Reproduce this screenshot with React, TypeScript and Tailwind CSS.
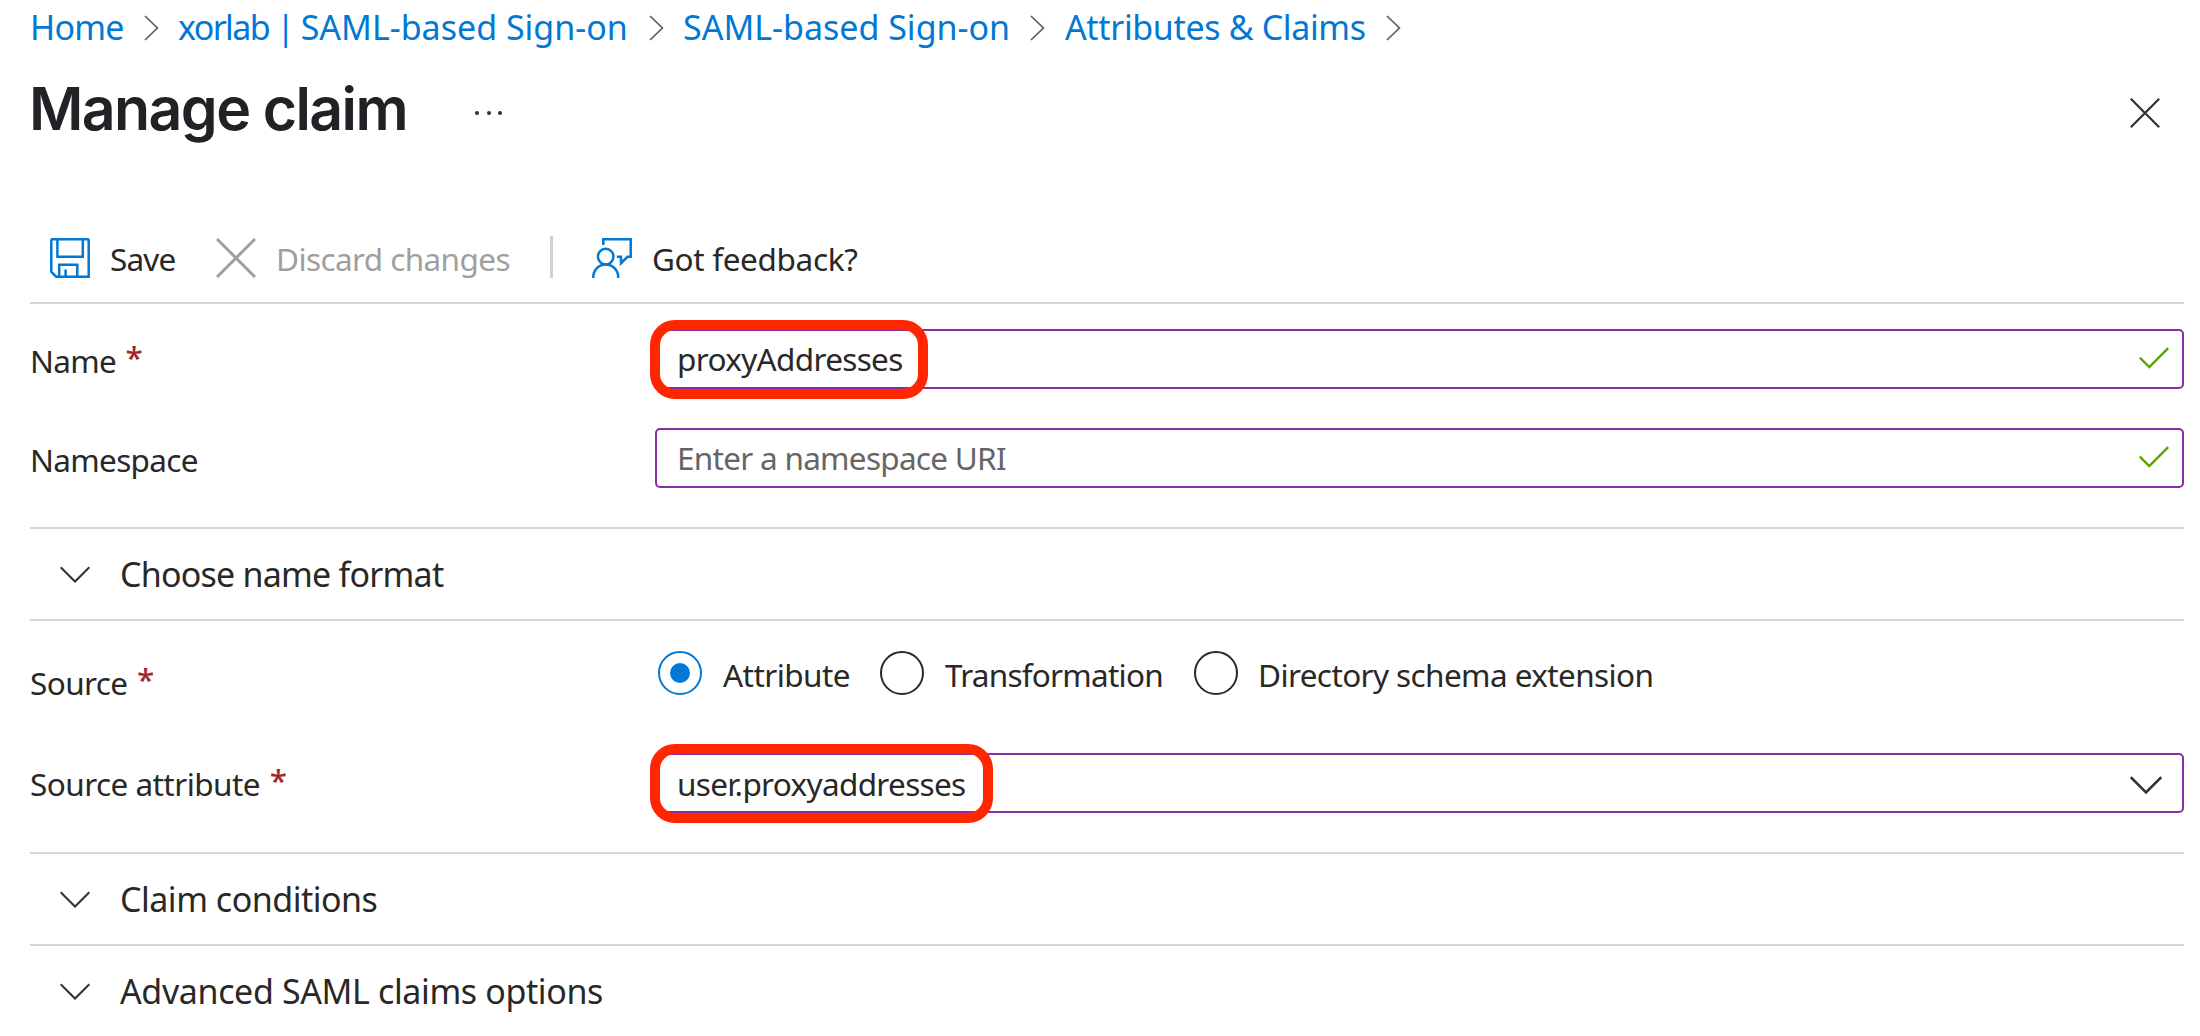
import React, { ReactNode } from 'react';

function BreadcrumbChevron() {
  return (
    <svg width="15" height="26" viewBox="0 0 15 26" className="mt-[2px] -ml-px mr-px shrink-0" fill="none" stroke="#605e5c" strokeWidth="1.7">
      <path d="M1 1L13.4 13L1 25" />
    </svg>
  );
}

function ChevronDown({ className = '', w = 30, stroke = 2 }: { className?: string; w?: number; stroke?: number }) {
  return (
    <svg width={w} height={(w * 18) / 30} viewBox="0 0 30 18" className={`shrink-0 ${className}`} fill="none" stroke="#323130" strokeWidth={stroke}>
      <path d="M0.7 1.2L15 15.5L29.3 1.2" />
    </svg>
  );
}

function Check() {
  return (
    <svg width="30" height="22" viewBox="0 0 30 22" className="-mt-[2px] mr-[13px] shrink-0" fill="none" stroke="#57a300" strokeWidth="2.4">
      <path d="M0.8 10.6L10.3 20L29.2 1.2" />
    </svg>
  );
}

function SaveIcon() {
  return (
    <svg width="40" height="40" viewBox="0 0 40 40" className="shrink-0" fill="none" stroke="#0078d4" strokeWidth="2.5">
      <path d="M1.3 2.2Q1.3 1.3 2.2 1.3H37.8Q38.7 1.3 38.7 2.2V38.7H6.2L1.3 33.8Z" />
      <path d="M7.4 1.3V18.7H32.8V1.3" />
      <path d="M9.2 38.7V26.7H27.3V38.7" />
      <path d="M15.6 38.7V31.5" />
    </svg>
  );
}

function FeedbackIcon() {
  return (
    <svg width="40" height="40" viewBox="0 0 40 40" className="shrink-0" fill="none" stroke="#0078d4" strokeWidth="2.5">
      <circle cx="13.7" cy="18.6" r="7.8" />
      <path d="M1.3 40V39C1.3 32 6.8 26.4 13.7 26.4S26.2 32 26.2 39V40" />
      <path d="M11.3 7V1.3H38.7V18.8H35.5L29 25.2V18.8H24.8" />
    </svg>
  );
}

function Required() {
  return <span className="relative -top-1 left-[2px] font-medium text-[#a4262c]">*</span>;
}

function Highlight({ className }: { className: string }) {
  return <div className={`absolute -left-[5px] -top-[10px] h-[79px] rounded-[25px] border-[10px] border-[#ff2600] ${className}`} />;
}

function Field({ children, icon, highlight }: { children: ReactNode; icon: ReactNode; highlight?: string }) {
  return (
    <div className="relative flex h-[60px] w-[1529px] items-center justify-between rounded-[5px] border-2 border-[#8a2da5] pl-5">
      {children}
      {icon}
      {highlight && (
        <div className="absolute -left-[2px] -top-[1px]">
          <Highlight className={highlight} />
        </div>
      )}
    </div>
  );
}

function Radio({ checked, className = '' }: { checked?: boolean; className?: string }) {
  return (
    <span className={`flex size-11 shrink-0 items-center justify-center rounded-full border-2 ${checked ? 'border-[#0078d4]' : 'border-[#292827]'} ${className}`}>
      {checked && <span className="size-5 rounded-full bg-[#0078d4]" />}
    </span>
  );
}

function Section({ children, className = '' }: { children: ReactNode; className?: string }) {
  return (
    <div className={`ml-[30px] mr-4 flex h-[92px] items-center border-t-2 border-[#d6d6d6] pl-[30px] text-[34px] ${className}`}>
      <ChevronDown className="mt-px" />
      {children}
    </div>
  );
}

export default function App() {
  return (
    <div className="h-[1036px] w-[2200px] overflow-hidden bg-white font-['Noto_Sans',sans-serif] text-[31.5px] leading-[44px] whitespace-nowrap text-[#292827]">
      <nav className="flex h-[54px] items-center pl-[30px] text-[34px] text-[#0078d4]">
        <a className="w-[115px] tracking-[-0.8px]">Home</a>
        <BreadcrumbChevron />
        <a className="w-[490px] pl-[18px]">
          <span className="tracking-[-1.6px]">xorlab | </span>
          <span>SAML-based Sign-on</span>
        </a>
        <BreadcrumbChevron />
        <a className="w-[366px] pl-[18px]">SAML-based Sign-on</a>
        <BreadcrumbChevron />
        <a className="w-[341px] pl-[19px] tracking-[-0.36px]">Attributes &amp; Claims</a>
        <BreadcrumbChevron />
      </nav>

      <header className="flex h-[108px] items-center pl-[29px] pr-10">
        <h1 className="mt-[2px] w-[446px] font-['Inter',sans-serif] text-[59px] leading-[72px] font-semibold tracking-[-1.6px] text-[#212126]">Manage claim</h1>
        <div className="mt-[10px] flex w-[27px] justify-between">
          <span className="size-1 rounded-full bg-[#323130]" />
          <span className="size-1 rounded-full bg-[#323130]" />
          <span className="size-1 rounded-full bg-[#323130]" />
        </div>
        <svg width="30" height="30" viewBox="0 0 30 30" className="mt-[10px] ml-auto" fill="none" stroke="#323130" strokeWidth="2.2">
          <path d="M0.8 0.8L29.2 29.2M29.2 0.8L0.8 29.2" />
        </svg>
      </header>

      <div className="ml-[30px] mr-4 flex h-[142px] items-center border-b-2 border-[#d6d6d6] pt-[52px] pl-5">
        <SaveIcon />
        <span className="w-[126px] pt-[2px] pl-[20px] tracking-[-0.8px]">Save</span>
        <svg width="40" height="40" viewBox="0 0 40 40" className="shrink-0" fill="none" stroke="#a19f9d" strokeWidth="3">
          <path d="M1 1L39 39M39 1L1 39" />
        </svg>
        <span className="w-[294px] pt-[2px] pl-5 tracking-[-0.6px] text-[#a19f9d]">Discard changes</span>
        <span className="-mt-[2px] h-[42px] w-[3px] bg-[#d2d0ce]" />
        <span className="ml-[39px]">
          <FeedbackIcon />
        </span>
        <span className="pt-[2px] pl-5 tracking-[-0.34px]">Got feedback?</span>
      </div>

      <div className="flex h-[223px] flex-col gap-[39px] pt-[25px] pl-[30px]">
        <div className="flex items-center">
          <label className="w-[625px] pt-1 tracking-[-0.7px]">
            Name <Required />
          </label>
          <Field icon={<Check />} highlight="w-[278px]">
            <span className="tracking-[-0.67px]">proxyAddresses</span>
          </Field>
        </div>
        <div className="flex items-center">
          <label className="w-[625px] pt-1 tracking-[-0.67px]">Namespace</label>
          <Field icon={<Check />}>
            <span className="tracking-[-0.72px] text-[#666564]">Enter a namespace URI</span>
          </Field>
        </div>
      </div>

      <Section>
        <span className="pl-[30px] tracking-[-0.77px]">Choose name format</span>
      </Section>

      <div className="ml-[30px] mr-4 border-t-2 border-[#d6d6d6]" />
      <div className="flex h-[231px] flex-col pt-[30px]">
        <div className="flex h-11 items-center pl-[30px]">
          <label className="w-[628px] pt-[20px] tracking-[-0.6px]">
            Source <Required />
          </label>
          <Radio checked />
          <span className="w-[178px] pt-1 pl-[21px] tracking-[-0.55px]">Attribute</span>
          <Radio />
          <span className="w-[270px] pt-1 pl-[21px] tracking-[-0.76px]">Transformation</span>
          <Radio />
          <span className="pt-1 pl-5 tracking-[-0.6px]">Directory schema extension</span>
        </div>
        <div className="mt-[58px] flex items-center pl-[30px]">
          <label className="w-[625px] pt-[2px] tracking-[-0.55px]">
            Source attribute <Required />
          </label>
          <Field icon={<ChevronDown w={32} stroke={2.4} className="mt-[6px] mr-[20px]" />} highlight="w-[343px]">
            <span className="pt-[2px] tracking-[-0.67px]">user.proxyaddresses</span>
          </Field>
        </div>
      </div>

      <Section>
        <span className="-mt-[1px] pl-[30px] tracking-[-0.49px]">Claim conditions</span>
      </Section>
      <Section>
        <span className="-mt-[1px] pl-[30px] tracking-[-0.37px]">Advanced SAML claims options</span>
      </Section>
    </div>
  );
}
